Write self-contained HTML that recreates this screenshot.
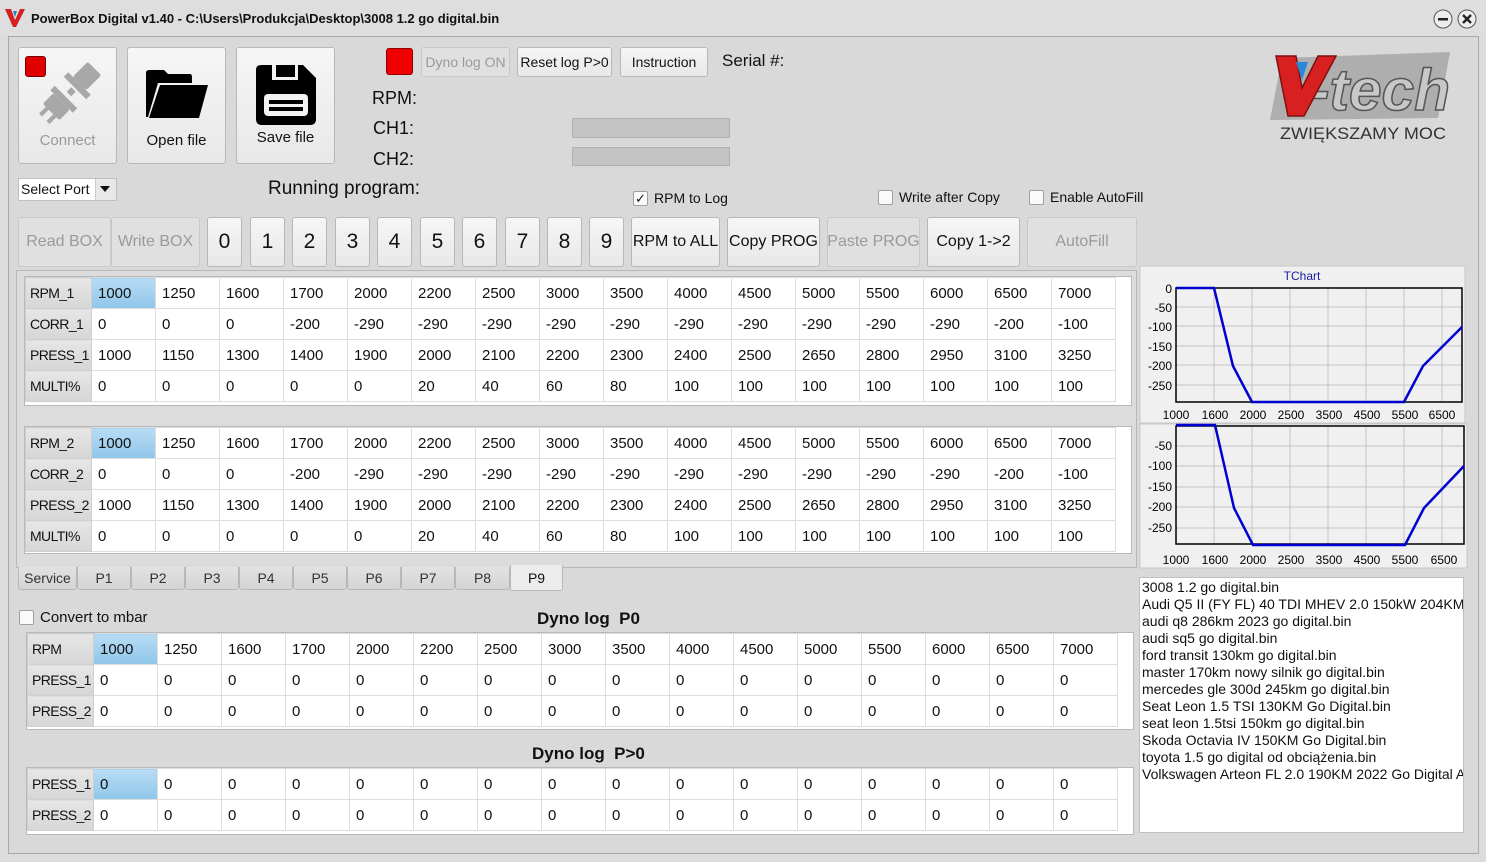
<!DOCTYPE html>
<html><head><meta charset="utf-8">
<style>
*{box-sizing:border-box;margin:0;padding:0}
body{width:1486px;height:862px;background:#dcdcdc;font-family:"Liberation Sans",sans-serif;position:relative;overflow:hidden;color:#111}
.a{position:absolute}
.btn{position:absolute;background:linear-gradient(#f6f6f6,#e8e8e8);border:1px solid #b8b8b8;border-radius:3px;display:flex;align-items:center;justify-content:center;font-size:15px;color:#111;white-space:nowrap}
.dis{color:#9a9a9a;background:#e0e0e0;border-color:#c8c8c8}
.big{font-size:21px}
.lbl{position:absolute;font-size:18px;white-space:nowrap}
.cb{position:absolute;font-size:14px;white-space:nowrap;display:flex;align-items:center}
.cb i{display:inline-block;width:15px;height:15px;border:1px solid #a0a0a0;border-radius:2px;background:#fafafa;margin-right:6px;font-style:normal;font-size:13px;line-height:13px;text-align:center}
table{border-collapse:collapse;table-layout:fixed;background:#fff;font-size:15px}
td{height:31px;border:1px solid #dedede;padding-left:6px;white-space:nowrap;overflow:hidden}
td.h{background:linear-gradient(#e6e6e6,#d6d6d6);border-color:#d0d0d0;width:65px;padding-left:4px;font-size:14px;letter-spacing:-0.6px}
td.s{background:linear-gradient(#b8dcf4,#8fc6ea)}
.frame{position:absolute;background:#fff;border:1px solid #b8b8b8}
.tab{position:absolute;top:567px;height:23px;border:1px solid #b8b8b8;border-top:none;background:linear-gradient(#e2e2e2,#d4d4d4);font-size:14px;display:flex;align-items:center;justify-content:center;color:#333;border-radius:0 0 3px 3px}
</style></head><body>
<div class="a" style="left:0;top:0;width:1486px;height:36px;background:#dedede"></div>
<svg class="a" style="left:4px;top:8px" width="22" height="20" viewBox="0 0 22 20"><path d="M1 1 L7 1 L11 12 L16 1 L21 1 L12 19 L9 19 Z" fill="#d42020"/><path d="M9 3 L13 3 L11 9Z" fill="#2a7fd0"/></svg>
<div class="a" style="left:31px;top:11px;font-size:13px;font-weight:bold;color:#111">PowerBox Digital v1.40 - C:\Users\Produkcja\Desktop\3008 1.2 go digital.bin</div>
<svg class="a" style="left:1432px;top:8px" width="50" height="22"><circle cx="11" cy="11" r="9" fill="#eee" stroke="#555"/><rect x="6" y="10" width="10" height="2.5" fill="#222"/><circle cx="35" cy="11" r="9" fill="#eee" stroke="#555"/><path d="M31 7 L39 15 M39 7 L31 15" stroke="#222" stroke-width="2.4"/></svg>
<div class="a" style="left:8px;top:36px;width:1471px;height:818px;border:1px solid #a8a8a8;background:#d9d9d9"></div>

<div class="btn" style="left:18px;top:47px;width:99px;height:117px;flex-direction:column;justify-content:flex-end;padding-bottom:14px;color:#999">Connect</div>
<svg class="a" style="left:34px;top:60px" width="70" height="68" viewBox="0 0 66 64"><g fill="#a8a8a8" transform="rotate(45 33 32)"><rect x="24" y="-2" width="18" height="20" rx="2"/><rect x="18" y="18" width="30" height="6"/><rect x="30" y="26" width="6" height="6"/><rect x="18" y="36" width="30" height="6"/><rect x="22" y="42" width="22" height="14" rx="2"/><rect x="26" y="56" width="4" height="9"/><rect x="36" y="56" width="4" height="9"/></g></svg>
<div class="a" style="left:25px;top:56px;width:21px;height:21px;background:#e00000;border:1px solid #700;border-radius:3px"></div>
<div class="btn" style="left:127px;top:47px;width:99px;height:117px;flex-direction:column;justify-content:flex-end;padding-bottom:14px">Open file</div>
<svg class="a" style="left:144px;top:69px" width="66" height="52" viewBox="0 0 66 52"><path d="M2 4 Q2 1 5 1 L20 1 L24 5 L46 5 Q48 5 48 8 L48 14 L14 14 L4 48 L2 48 Z" fill="#000"/><path d="M16 16 L64 16 L55 49 L5 49 Z" fill="#000"/></svg>
<div class="btn" style="left:236px;top:47px;width:99px;height:117px;flex-direction:column;justify-content:flex-end;padding-bottom:17px">Save file</div>
<svg class="a" style="left:256px;top:64px" width="61" height="62" viewBox="0 0 61 62"><path d="M5 1 L47 1 L60 14 L60 55 Q60 61 54 61 L6 61 Q0 61 0 55 L0 6 Q0 1 5 1Z" fill="#000"/><rect x="16" y="1" width="26" height="15" fill="#f2f2f2"/><rect x="20" y="1" width="19" height="12" fill="#000"/><rect x="8" y="30" width="44" height="22" rx="4" fill="#f2f2f2"/><rect x="13" y="36" width="34" height="4" fill="#000"/><rect x="13" y="43" width="34" height="4" fill="#000"/></svg>
<div class="a" style="left:18px;top:178px;width:99px;height:23px;background:#fff;border:1px solid #c0c0c0;font-size:14px;padding:2px 0 0 2px">Select Port</div>
<div class="a" style="left:95px;top:179px;width:21px;height:21px;background:#e8e8e8;border-left:1px solid #ccc"></div>
<svg class="a" style="left:99px;top:185px" width="12" height="8"><path d="M1 1 L11 1 L6 7Z" fill="#111"/></svg>

<div class="a" style="left:386px;top:48px;width:27px;height:27px;background:#f00000;border:1px solid #800;border-radius:3px"></div>
<div class="btn dis" style="left:421px;top:47px;width:89px;height:30px;font-size:14px">Dyno log ON</div>
<div class="btn" style="left:517px;top:47px;width:95px;height:30px;font-size:14px">Reset log P&gt;0</div>
<div class="btn" style="left:620px;top:47px;width:88px;height:30px;font-size:14px">Instruction</div>
<div class="lbl" style="left:722px;top:51px;font-size:17px">Serial #:</div>
<div class="lbl" style="left:372px;top:88px">RPM:</div>
<div class="lbl" style="left:373px;top:118px">CH1:</div>
<div class="lbl" style="left:373px;top:149px">CH2:</div>
<div class="a" style="left:572px;top:118px;width:158px;height:20px;background:#c4c4c4;border:1px solid #b0b0b0"></div>
<div class="a" style="left:572px;top:147px;width:158px;height:19px;background:#c4c4c4;border:1px solid #b0b0b0"></div>
<div class="lbl" style="left:268px;top:178px;font-size:19px">Running program:</div>
<div class="cb" style="left:633px;top:190px"><i>✓</i>RPM to Log</div>
<div class="cb" style="left:878px;top:189px"><i></i>Write after Copy</div>
<div class="cb" style="left:1029px;top:189px"><i></i>Enable AutoFill</div>

<svg class="a" style="left:1270px;top:48px" width="190" height="100" viewBox="0 0 190 100">
<path d="M12 10 L180 4 L168 70 L0 72Z" fill="#8a8a8a" opacity=".55"/>
<text x="40" y="62" font-family="Liberation Sans" font-style="italic" font-weight="bold" font-size="58" fill="#c8c8c8" stroke="#555" stroke-width="1.5" textLength="140" lengthAdjust="spacingAndGlyphs">-tech</text>
<path d="M6 8 L26 8 L32 40 L48 8 L66 8 L34 68 L18 68Z" fill="#d82020" stroke="#801010" stroke-width="1.5"/>
<path d="M26 14 L38 14 L32 32Z" fill="#2a88d8"/>
<text x="10" y="91" font-family="Liberation Sans" font-size="17" fill="#333" textLength="166" lengthAdjust="spacingAndGlyphs">ZWIĘKSZAMY MOC</text>
</svg>

<div class="btn dis" style="left:18px;top:217px;width:93px;height:50px;font-size:16px">Read BOX</div>
<div class="btn dis" style="left:111px;top:217px;width:89px;height:50px;font-size:16px">Write BOX</div>
<div class="btn big" style="left:207px;top:217px;width:35px;height:50px">0</div>
<div class="btn big" style="left:250px;top:217px;width:35px;height:50px">1</div>
<div class="btn big" style="left:292px;top:217px;width:35px;height:50px">2</div>
<div class="btn big" style="left:335px;top:217px;width:35px;height:50px">3</div>
<div class="btn big" style="left:377px;top:217px;width:35px;height:50px">4</div>
<div class="btn big" style="left:420px;top:217px;width:35px;height:50px">5</div>
<div class="btn big" style="left:462px;top:217px;width:35px;height:50px">6</div>
<div class="btn big" style="left:505px;top:217px;width:35px;height:50px">7</div>
<div class="btn big" style="left:547px;top:217px;width:35px;height:50px">8</div>
<div class="btn big" style="left:589px;top:217px;width:35px;height:50px">9</div>
<div class="btn" style="left:631px;top:217px;width:89px;height:50px;font-size:16px">RPM to ALL</div>
<div class="btn" style="left:727px;top:217px;width:93px;height:50px;font-size:16px">Copy PROG</div>
<div class="btn dis" style="left:827px;top:217px;width:93px;height:50px;font-size:16px">Paste PROG</div>
<div class="btn" style="left:927px;top:217px;width:93px;height:50px;font-size:16px">Copy 1-&gt;2</div>
<div class="btn dis" style="left:1027px;top:217px;width:110px;height:50px;font-size:16px">AutoFill</div>

<div class="a" style="left:16px;top:270px;width:1121px;height:298px;border:1px solid #b8b8b8;background:#dcdcdc"></div>
<div class="frame" style="left:24px;top:276px;width:1108px;height:130px"></div>
<div class="a" style="left:25px;top:277px">
<table style="width:1090px"><colgroup><col style="width:66px"><col span="16" style="width:64px"></colgroup>
<tr><td class="h">RPM_1</td><td class="s">1000</td><td>1250</td><td>1600</td><td>1700</td><td>2000</td><td>2200</td><td>2500</td><td>3000</td><td>3500</td><td>4000</td><td>4500</td><td>5000</td><td>5500</td><td>6000</td><td>6500</td><td>7000</td></tr>
<tr><td class="h">CORR_1</td><td>0</td><td>0</td><td>0</td><td>-200</td><td>-290</td><td>-290</td><td>-290</td><td>-290</td><td>-290</td><td>-290</td><td>-290</td><td>-290</td><td>-290</td><td>-290</td><td>-200</td><td>-100</td></tr>
<tr><td class="h">PRESS_1</td><td>1000</td><td>1150</td><td>1300</td><td>1400</td><td>1900</td><td>2000</td><td>2100</td><td>2200</td><td>2300</td><td>2400</td><td>2500</td><td>2650</td><td>2800</td><td>2950</td><td>3100</td><td>3250</td></tr>
<tr><td class="h">MULTI%</td><td>0</td><td>0</td><td>0</td><td>0</td><td>0</td><td>20</td><td>40</td><td>60</td><td>80</td><td>100</td><td>100</td><td>100</td><td>100</td><td>100</td><td>100</td><td>100</td></tr>
</table></div>
<div class="frame" style="left:24px;top:426px;width:1108px;height:128px"></div>
<div class="a" style="left:25px;top:427px">
<table style="width:1090px"><colgroup><col style="width:66px"><col span="16" style="width:64px"></colgroup>
<tr><td class="h">RPM_2</td><td class="s">1000</td><td>1250</td><td>1600</td><td>1700</td><td>2000</td><td>2200</td><td>2500</td><td>3000</td><td>3500</td><td>4000</td><td>4500</td><td>5000</td><td>5500</td><td>6000</td><td>6500</td><td>7000</td></tr>
<tr><td class="h">CORR_2</td><td>0</td><td>0</td><td>0</td><td>-200</td><td>-290</td><td>-290</td><td>-290</td><td>-290</td><td>-290</td><td>-290</td><td>-290</td><td>-290</td><td>-290</td><td>-290</td><td>-200</td><td>-100</td></tr>
<tr><td class="h">PRESS_2</td><td>1000</td><td>1150</td><td>1300</td><td>1400</td><td>1900</td><td>2000</td><td>2100</td><td>2200</td><td>2300</td><td>2400</td><td>2500</td><td>2650</td><td>2800</td><td>2950</td><td>3100</td><td>3250</td></tr>
<tr><td class="h">MULTI%</td><td>0</td><td>0</td><td>0</td><td>0</td><td>0</td><td>20</td><td>40</td><td>60</td><td>80</td><td>100</td><td>100</td><td>100</td><td>100</td><td>100</td><td>100</td><td>100</td></tr>
</table></div>

<div class="tab" style="left:18px;width:59px">Service</div>
<div class="tab" style="left:77px;width:54px">P1</div>
<div class="tab" style="left:131px;width:54px">P2</div>
<div class="tab" style="left:185px;width:54px">P3</div>
<div class="tab" style="left:239px;width:54px">P4</div>
<div class="tab" style="left:293px;width:54px">P5</div>
<div class="tab" style="left:347px;width:54px">P6</div>
<div class="tab" style="left:401px;width:54px">P7</div>
<div class="tab" style="left:455px;width:55px">P8</div>
<div class="tab" style="left:510px;top:565px;width:53px;height:26px;background:#ececec;color:#111">P9</div>

<div class="cb" style="left:19px;top:609px;font-size:15px"><i></i>Convert to mbar</div>
<div class="a" style="left:537px;top:609px;font-size:17px;font-weight:bold">Dyno log &nbsp;P0</div>
<div class="frame" style="left:26px;top:632px;width:1108px;height:98px"></div>
<div class="a" style="left:27px;top:633px">
<table style="width:1090px"><colgroup><col style="width:66px"><col span="16" style="width:64px"></colgroup>
<tr><td class="h">RPM</td><td class="s">1000</td><td>1250</td><td>1600</td><td>1700</td><td>2000</td><td>2200</td><td>2500</td><td>3000</td><td>3500</td><td>4000</td><td>4500</td><td>5000</td><td>5500</td><td>6000</td><td>6500</td><td>7000</td></tr>
<tr><td class="h">PRESS_1</td><td>0</td><td>0</td><td>0</td><td>0</td><td>0</td><td>0</td><td>0</td><td>0</td><td>0</td><td>0</td><td>0</td><td>0</td><td>0</td><td>0</td><td>0</td><td>0</td></tr>
<tr><td class="h">PRESS_2</td><td>0</td><td>0</td><td>0</td><td>0</td><td>0</td><td>0</td><td>0</td><td>0</td><td>0</td><td>0</td><td>0</td><td>0</td><td>0</td><td>0</td><td>0</td><td>0</td></tr>
</table></div>
<div class="a" style="left:532px;top:744px;font-size:17px;font-weight:bold">Dyno log &nbsp;P&gt;0</div>
<div class="frame" style="left:26px;top:767px;width:1108px;height:68px"></div>
<div class="a" style="left:27px;top:768px">
<table style="width:1090px"><colgroup><col style="width:66px"><col span="16" style="width:64px"></colgroup>
<tr><td class="h">PRESS_1</td><td class="s">0</td><td>0</td><td>0</td><td>0</td><td>0</td><td>0</td><td>0</td><td>0</td><td>0</td><td>0</td><td>0</td><td>0</td><td>0</td><td>0</td><td>0</td><td>0</td></tr>
<tr><td class="h">PRESS_2</td><td>0</td><td>0</td><td>0</td><td>0</td><td>0</td><td>0</td><td>0</td><td>0</td><td>0</td><td>0</td><td>0</td><td>0</td><td>0</td><td>0</td><td>0</td><td>0</td></tr>
</table></div>

<svg class="a" style="left:1138px;top:265px" width="330" height="305" font-family="Liberation Sans" font-size="12">
<rect x="2" y="1" width="325" height="157" fill="#f0f0f0" stroke="#c8c8c8"/>
<rect x="2" y="159" width="327" height="144" fill="#f0f0f0" stroke="#c8c8c8"/>
<text x="164" y="15" text-anchor="middle" fill="#1a1aa0">TChart</text>
<g stroke="#c4c4c4">
<path d="M76 23V137M114 23V137M152 23V137M190 23V137M228 23V137M266 23V137M304 23V137"/>
<path d="M38 42H324M38 61H324M38 81H324M38 100H324M38 120H324"/>
<path d="M76 161V279M114 161V279M152 161V279M190 161V279M228 161V279M266 161V279M304 161V279"/>
<path d="M38 181H326M38 201H326M38 222H326M38 242H326M38 263H326"/>
</g>
<rect x="38" y="23" width="286" height="114" fill="none" stroke="#000" stroke-width="1.5"/>
<rect x="38" y="161" width="288" height="118" fill="none" stroke="#000" stroke-width="1.5"/>
<polyline fill="none" stroke="#0000d0" stroke-width="2.5" points="38,23 76,23 95,101 114,137 266,137 285,101 324,62"/>
<polyline fill="none" stroke="#0000d0" stroke-width="2.5" points="38,160 77,160 96,243 115,280 267,280 286,243 326,201"/>
<g text-anchor="end" fill="#000">
<text x="34" y="28">0</text><text x="34" y="47">-50</text><text x="34" y="66">-100</text><text x="34" y="86">-150</text><text x="34" y="105">-200</text><text x="34" y="125">-250</text>
<text x="34" y="185">-50</text><text x="34" y="205">-100</text><text x="34" y="226">-150</text><text x="34" y="246">-200</text><text x="34" y="267">-250</text>
</g>
<g text-anchor="middle" fill="#000">
<text x="38" y="154">1000</text><text x="77" y="154">1600</text><text x="115" y="154">2000</text><text x="153" y="154">2500</text><text x="191" y="154">3500</text><text x="229" y="154">4500</text><text x="267" y="154">5500</text><text x="304" y="154">6500</text>
<text x="38" y="299">1000</text><text x="77" y="299">1600</text><text x="115" y="299">2000</text><text x="153" y="299">2500</text><text x="191" y="299">3500</text><text x="229" y="299">4500</text><text x="267" y="299">5500</text><text x="306" y="299">6500</text>
</g>
</svg>

<div class="a" style="left:1139px;top:577px;width:325px;height:256px;background:#fff;border:1px solid #c0c0c0;font-size:14px;line-height:17px;padding:1px 0 0 2px;overflow:hidden;white-space:nowrap">
3008 1.2 go digital.bin<br>Audi Q5 II (FY FL) 40 TDI MHEV 2.0 150kW 204KM (<br>audi q8 286km 2023 go digital.bin<br>audi sq5 go digital.bin<br>ford transit 130km go digital.bin<br>master 170km nowy silnik go digital.bin<br>mercedes gle 300d 245km go digital.bin<br>Seat Leon 1.5 TSI 130KM Go Digital.bin<br>seat leon 1.5tsi 150km go digital.bin<br>Skoda Octavia IV 150KM Go Digital.bin<br>toyota 1.5 go digital od obciążenia.bin<br>Volkswagen Arteon FL 2.0 190KM 2022 Go Digital Au
</div>
</body></html>
